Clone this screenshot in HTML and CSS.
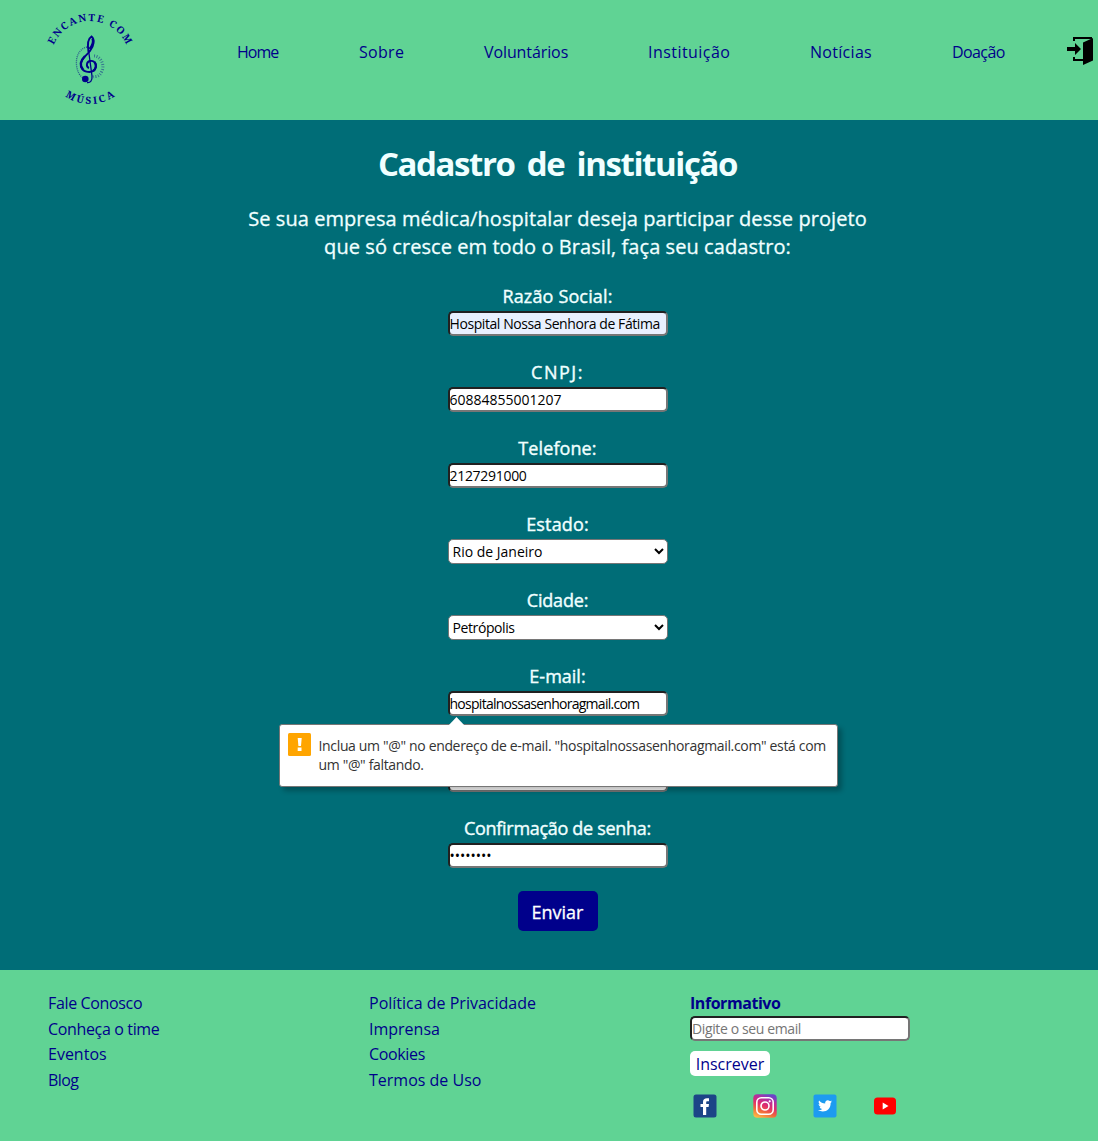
FILE: index.html
```html
<!DOCTYPE html>
<html lang="pt-BR">
<head>
<meta charset="utf-8">
<title>Cadastro de instituição</title>
<link rel="stylesheet" href="styles.css">
</head>
<body>
<header class="header">
  <svg class="logo" viewBox="0 0 120 120" role="img" aria-label="Encante com Música">
    <defs>
      <path id="arc-top" d="M20.5 60.500A39.500 39.500 0 0 1 99.500 60.500"/>
      <path id="arc-bottom" d="M16.500 60.500A43.500 43.500 0 0 0 103.500 60.500"/>
    </defs>
    <text class="logo-text" text-anchor="middle" textLength="92"><textPath href="#arc-top" startOffset="50%" textLength="92">ENCANTE COM</textPath></text>
    <text class="logo-text" text-anchor="middle" textLength="53"><textPath href="#arc-bottom" startOffset="50%" textLength="53">MÚSICA</textPath></text>
    <g fill="none" stroke="#00008b">
      <path d="M57 47C48 49 45 59 47 68S54 79 58 79" stroke-width="1.300" stroke-dasharray="1 1" opacity=".6"/>
      <path d="M64 56C70 56 75 64 72 71S65 76 63 77" stroke-width="3" stroke-dasharray="1 1.500" opacity=".45"/>
      <path d="M58.500 50L62 76C62.500 81 60 83 57 82.500" stroke-width="1.300"/>
      <path d="M58.500 52C57 43 59 38 61.500 36.500C65 39 64 46 60 51C55 57 50 60 51 66C52 72 60 73.500 64 70.500C68 66 65 60 60 61C56 62 56 67 59 68" stroke-width="1.900"/>
      <path d="M59.500 49C62 46 64 42 62.500 38.500M55 56C50 61 50 66 53 69.500M64.500 62C67 65 66 69 63 71" stroke-width="2.300"/>
    </g>
    <circle cx="55.300" cy="79" r="3.300" fill="#00008b"/>
  </svg>
  <nav>
    <ul class="menu">
      <li class="t-home">Home</li>
      <li class="t-sobre">Sobre</li>
      <li class="t-vol">Voluntários</li>
      <li class="t-inst">Instituição</li>
      <li class="t-not">Notícias</li>
      <li class="t-doa">Doação</li>
    </ul>
  </nav>
  <svg class="login" viewBox="0 0 26 28" aria-label="Entrar">
    <path d="M7 4V1H25M7 20V23H17" fill="none" stroke="#000" stroke-width="2"/>
    <path d="M26 0V23.500L16 28V5.500L26 1ZM0 10H8V6L14 12L8 18V14H0Z"/>
  </svg>
</header>

<main class="main">
  <h1 class="title">Cadastro de instituição</h1>
  <p class="intro"><span class="intro-a">Se sua empresa médica/hospitalar deseja participar desse projeto</span><br><span class="intro-b">que só cresce em todo o Brasil, faça seu cadastro:</span></p>
  <form class="form" novalidate>
    <div class="field"><label for="razao" class="l-razao">Razão Social:</label><input id="razao" class="control filled t-hospital" value="Hospital Nossa Senhora de Fátima"></div>
    <div class="field"><label for="cnpj" class="l-cnpj">CNPJ:</label><input id="cnpj" class="control" value="60884855001207"></div>
    <div class="field"><label for="tel" class="l-tel">Telefone:</label><input id="tel" class="control t-tel" value="2127291000"></div>
    <div class="field"><label for="uf" class="l-uf">Estado:</label><select id="uf" class="control select"><option>Rio de Janeiro</option></select></div>
    <div class="field"><label for="cidade" class="l-cidade">Cidade:</label><select id="cidade" class="control select t-city"><option>Petrópolis</option></select></div>
    <div class="field">
      <label for="email" class="l-email">E-mail:</label><input id="email" class="control t-email" value="hospitalnossasenhoragmail.com">
      <div class="bubble" role="alert">
        <svg class="bubble-arrow" viewBox="0 0 17 9"><path d="M0 9L8.500 0L17 9Z" fill="#fff"/></svg>
        <svg class="warn" viewBox="0 0 23 23"><rect width="23" height="23" rx="1.500" fill="#ffa500"/><path d="M9.700 5H13.700L13 13H10.400ZM9.700 14.500H13.500V18H9.700Z" fill="#fff"/></svg>
        <p class="bubble-text">Inclua um "@" no endereço de e-mail. "hospitalnossasenhoragmail.com" está com<br>um "@" faltando.</p>
      </div>
    </div>
    <div class="field"><div class="covered"></div><input id="senha" class="control" type="password" value="encante1" aria-label="Senha"></div>
    <div class="field"><label for="senha2" class="l-conf">Confirmação de senha:</label><input id="senha2" class="control" type="password" value="encante1"></div>
    <button class="send" type="button">Enviar</button>
  </form>
</main>

<footer class="footer">
  <ul class="links">
    <li class="f-tight">Fale Conosco</li><li class="f-tight">Conheça o time</li><li>Eventos</li><li class="f-blog">Blog</li>
  </ul>
  <ul class="links">
    <li>Política de Privacidade</li><li>Imprensa</li><li class="f-tight">Cookies</li><li>Termos de Uso</li>
  </ul>
  <div class="news">
    <strong class="news-title">Informativo</strong>
    <input class="control t-news" placeholder="Digite o seu email" aria-label="Email">
    <button class="subscribe" type="button">Inscrever</button>
    <div class="social">
      <svg viewBox="0 0 24 24"><rect x=".5" y=".5" width="23" height="23" rx="2.500" fill="#1c4587"/><path d="M10 21V13H7.500V10H10V8C10 5.500 11.500 4.300 14 4.300H16V7.200H14.500C13.500 7.200 13.200 7.700 13.200 8.500V10H16L15.600 13H13.200V21Z" fill="#fff"/></svg>
      <svg viewBox="0 0 24 24">
        <defs><linearGradient id="ig" x1=".2" y1="1" x2=".6" y2="0"><stop offset="0" stop-color="#fdbb45"/><stop offset=".3" stop-color="#f2683c"/><stop offset=".55" stop-color="#e02c6d"/><stop offset=".8" stop-color="#b52ea0"/><stop offset="1" stop-color="#6b45c8"/></linearGradient></defs>
        <rect x=".3" y=".3" width="23.400" height="23.400" rx="4" fill="url(#ig)"/>
        <g fill="none" stroke="#fff" stroke-width="1.600"><rect x="3.800" y="3.800" width="16.400" height="16.400" rx="4.500"/><circle cx="12" cy="12" r="4"/></g><circle cx="16.700" cy="7.300" r="1.100" fill="#fff"/>
      </svg>
      <svg viewBox="0 0 24 24"><rect x=".5" y=".5" width="23" height="23" rx="2" fill="#1d9bf0"/><path d="M19 7.500C18.500 7.700 18 7.900 17.400 8C18 7.600 18.400 7.100 18.600 6.400C18 6.800 17.400 7 16.700 7.100C14.900 5.200 11.600 6.600 12.200 9.600C9.700 9.500 7.600 8.300 6.100 6.500C5.300 7.900 5.700 9.500 7 10.400C6.500 10.400 6 10.200 5.600 10C5.600 11.400 6.600 12.600 7.900 12.900C7.500 13 7 13 6.600 12.900C7 14.100 8 14.900 9.300 14.900C8.100 15.900 6.500 16.300 4.900 16.100C10.900 19.800 18 15.900 17.600 9C18.200 8.600 18.600 8.100 19 7.500Z" fill="#fff"/></svg>
      <svg viewBox="0 0 24 24"><rect x="1" y="3.500" width="22" height="17" rx="3.500" fill="#f00"/><path d="M9.700 8.500V15.500L15.500 12Z" fill="#fff"/></svg>
    </div>
  </div>
</footer>
</body>
</html>
```
FILE: styles.css
```css
* { box-sizing: border-box; }
body { margin: 0; width: 1098px; overflow-x: hidden; font: 16px/26px "Comic Sans MS", "Open Sans", sans-serif; color: #00008b; background: #60d394; }
ul { list-style: none; margin: 0; padding: 0; }
.header { height: 120px; display: flex; align-items: flex-start; background: #60d394; }
.logo { width: 120px; height: 120px; margin-left: 30px; flex: none; }
.logo-text { font: bold 10px "Noto Serif", "Liberation Serif", serif; fill: #00008b; }
.menu { display: grid; grid-template-columns: 42px 45px 84px 82px 62px 53px; column-gap: 80px; margin: 39px 0 0 87px; white-space: nowrap; }
.login { width: 26px; height: 28px; margin: 37px 0 0 62px; flex: none; }
.t-home { letter-spacing: -1px; }
.t-sobre { letter-spacing: .3px; }
.t-vol { letter-spacing: -.1px; }
.t-inst { letter-spacing: .45px; }
.t-not { letter-spacing: .3px; }
.t-doa { letter-spacing: -.6px; }

.main { height: 850px; width: 1115px; background: #006d77; color: #f0ffff; text-align: center; display: flex; flex-direction: column; align-items: center; }
.title { margin: 20px 0 0; font-size: 33px; line-height: 48px; letter-spacing: -1.4px; word-spacing: 5px; }
.intro { margin: 17px 0 0; font-size: 20px; line-height: 28px; white-space: nowrap; letter-spacing: .07px; -webkit-text-stroke: .3px; }
.form { margin-top: 22px; display: flex; flex-direction: column; align-items: center; }
.field { position: relative; height: 76px; width: 220px; display: flex; flex-direction: column; align-items: center; white-space: nowrap; }
.field label, .covered { height: 28px; flex: none; font-size: 18px; line-height: 26px; -webkit-text-stroke: .4px; }
.l-razao { letter-spacing: .15px; }
.l-cnpj { letter-spacing: 1.5px; }
.l-tel { letter-spacing: .1px; }
.l-uf { letter-spacing: .15px; }
.l-cidade { letter-spacing: -.2px; }
.l-conf { letter-spacing: -.3px; }
.control { display: block; width: 220px; height: 25px; flex: none; margin: 0; padding: 0; border: 2px inset #767676; border-radius: 5px; background: #fff; color: #000; font: 14px "Comic Sans MS", "Open Sans", sans-serif; }
.control::placeholder { color: #757575; }
.filled { background: #e8f0fe; }
.t-hospital { letter-spacing: -.42px; }
.t-tel { letter-spacing: -.3px; }
.t-city { letter-spacing: -.4px; }
.t-email { letter-spacing: -.73px; }
.t-news { letter-spacing: -.4px; }
.select { border: 1px solid #767676; }
.t-news::placeholder { letter-spacing: -.35px; }
.send { width: 80px; height: 40px; margin-top: 0; padding: 2px 0 0; border: 0; border-radius: 5px; background: #00008b; color: #fff; font: 18px "Comic Sans MS", "Open Sans", sans-serif; -webkit-text-stroke: .3px; }

.bubble { position: absolute; z-index: 2; left: -169px; top: 61px; width: 559px; height: 63px; border: 1px solid #767676; border-radius: 3px; background: #fff; box-shadow: 4px 4px 5px rgba(0, 0, 0, .25); display: flex; padding: 8px; gap: 8px; color: #333; text-align: left; }
.bubble-arrow { position: absolute; left: 168px; top: -8px; width: 17px; height: 9px; }
.warn { width: 23px; height: 23px; flex: none; }
.bubble-text { margin: 3px 0 0; font: 14px/19px "Open Sans", sans-serif; letter-spacing: -.34px; white-space: nowrap; }

.footer { height: 171px; padding: 21px 0 0 48px; display: grid; grid-template-columns: 321px 321px 1fr; background: #60d394; }
.links { line-height: 25.6px; }
.f-tight { letter-spacing: -.35px; }
.f-blog { letter-spacing: -.6px; }
.news { display: flex; flex-direction: column; align-items: flex-start; }
.news-title { line-height: 25px; letter-spacing: -.45px; }
.control.t-news { letter-spacing: normal; }
.control.t-news::placeholder { letter-spacing: -.38px; }
.subscribe { width: 80px; height: 25px; margin-top: 10px; padding: 0; border: 0; border-radius: 5px; background: #fff; color: #00008b; font: 16px "Comic Sans MS", "Open Sans", sans-serif; }
.social { display: flex; gap: 36px; margin: 18px 0 0 3px; }
.social svg { width: 24px; height: 24px; }
```
